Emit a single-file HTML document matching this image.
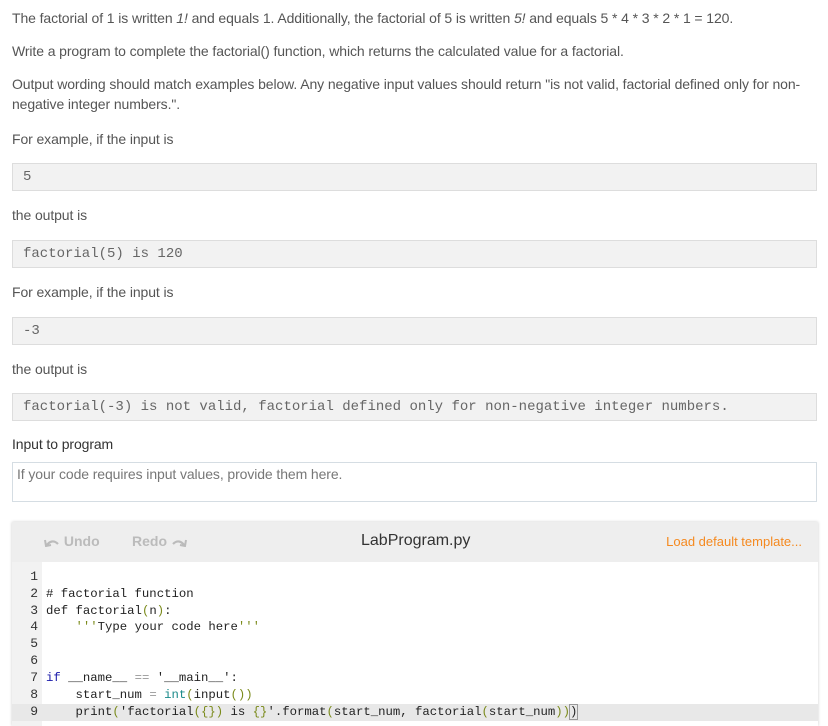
<!DOCTYPE html>
<html><head><meta charset="utf-8"><style>
body{margin:0;width:828px;height:726px;overflow:hidden;background:#fff;font-family:"Liberation Sans",sans-serif;color:#555;position:relative}
.t{position:absolute;left:12px;font-size:14px;line-height:20px;white-space:nowrap;letter-spacing:-0.1px}
.box{position:absolute;left:12px;width:793px;height:26px;background:#f2f2f2;border:1px solid #ddd;font-family:"Liberation Mono",monospace;font-size:14px;line-height:26px;color:#666;padding-left:10px;box-sizing:content-box}
.ed{position:absolute;left:12px;top:522px;width:806px;height:204px;background:#fff;box-shadow:0 0 3px rgba(0,0,0,.2)}
.hd{position:absolute;left:0;top:0;width:806px;height:40px;background:#eee}
.gut{position:absolute;left:0;top:40px;width:30px;height:164px;background:#f2f2f2}
.ln{position:absolute;left:0;width:26px;text-align:right;font-family:"Liberation Mono",monospace;font-size:13px;color:#333}
.cd{position:absolute;left:34px;font-family:"Liberation Mono",monospace;font-size:12.3px;color:#222;white-space:pre;line-height:17px}
.g{color:#7a8a1a}.b{color:#1a1aaa}.c{color:#1a8a8a}
</style></head><body>
<div class="t" style="top:8px">The factorial of 1 is written <i>1!</i> and equals 1. Additionally, the factorial of 5 is written <i>5!</i> and equals 5 * 4 * 3 * 2 * 1 = 120.</div>
<div class="t" style="top:41px">Write a program to complete the factorial() function, which returns the calculated value for a factorial.</div>
<div class="t" style="top:74px">Output wording should match examples below. Any negative input values should return "is not valid, factorial defined only for non-</div>
<div class="t" style="top:94px">negative integer numbers.".</div>
<div class="t" style="top:129px">For example, if the input is</div>
<div class="box" style="top:163px">5</div>
<div class="t" style="top:205px">the output is</div>
<div class="box" style="top:240px">factorial(5) is 120</div>
<div class="t" style="top:282px">For example, if the input is</div>
<div class="box" style="top:317px">-3</div>
<div class="t" style="top:359px">the output is</div>
<div class="box" style="top:393px">factorial(-3) is not valid, factorial defined only for non-negative integer numbers.</div>
<div class="t" style="top:434px;color:#333">Input to program</div>
<div style="position:absolute;left:12px;top:462px;width:805px;height:40px;border:1px solid #d5dde3;font-size:14px;color:#777;padding:3px 4px;box-sizing:border-box;letter-spacing:-0.1px">If your code requires input values, provide them here.</div>
<div class="ed">
<div class="hd">
<div style="position:absolute;left:32px;top:11px;font-size:14px;font-weight:bold;color:#bbb">
<svg width="16" height="10" viewBox="0 0 16 10" style="vertical-align:-1px"><path d="M2 9 Q8 1 14 7" stroke="#bbb" stroke-width="2.2" fill="none"/><path d="M1 3 L2 9 L7 8" stroke="#bbb" stroke-width="2" fill="none"/></svg> Undo</div>
<div style="position:absolute;left:120px;top:11px;font-size:14px;font-weight:bold;color:#bbb">Redo <svg width="16" height="10" viewBox="0 0 16 10" style="vertical-align:-1px"><path d="M14 9 Q8 1 2 7" stroke="#bbb" stroke-width="2.2" fill="none"/><path d="M15 3 L14 9 L9 8" stroke="#bbb" stroke-width="2" fill="none"/></svg></div>
<div style="position:absolute;left:349px;top:10px;font-size:16px;color:#333">LabProgram.py</div>
<div style="position:absolute;right:16px;top:12px;font-size:13px;color:#f5891f">Load default template...</div>
</div>
<div class="gut"></div>
<div style="position:absolute;left:0;top:182px;width:806px;height:17px;background:#e8e8e8"></div>
<div class="ln" style="top:47px">1</div><div class="ln" style="top:64px">2</div><div class="ln" style="top:81px">3</div><div class="ln" style="top:97px">4</div><div class="ln" style="top:114px">5</div><div class="ln" style="top:131px">6</div><div class="ln" style="top:148px">7</div><div class="ln" style="top:165px">8</div><div class="ln" style="top:182px">9</div>
<div class="cd" style="top:64px"># factorial function</div>
<div class="cd" style="top:81px">def factorial<span class="g">(</span>n<span class="g">)</span>:</div>
<div class="cd" style="top:97px">    <span class="g">'''</span>Type your code here<span class="g">'''</span></div>
<div class="cd" style="top:148px"><span class="b">if</span> __name__ <span style="color:#999">==</span> '__main__':</div>
<div class="cd" style="top:165px">    start_num <span style="color:#999">=</span> <span class="c">int</span><span class="g">(</span>input<span class="g">())</span></div>
<div class="cd" style="top:182px">    print<span class="g">(</span>'factorial<span class="g">({})</span> is <span class="g">{}</span>'.format<span class="g">(</span>start_num, factorial<span class="g">(</span>start_num<span class="g">))</span><span style="border:1px solid #999;margin-left:-1px">)</span></div>
</div>
</body></html>
